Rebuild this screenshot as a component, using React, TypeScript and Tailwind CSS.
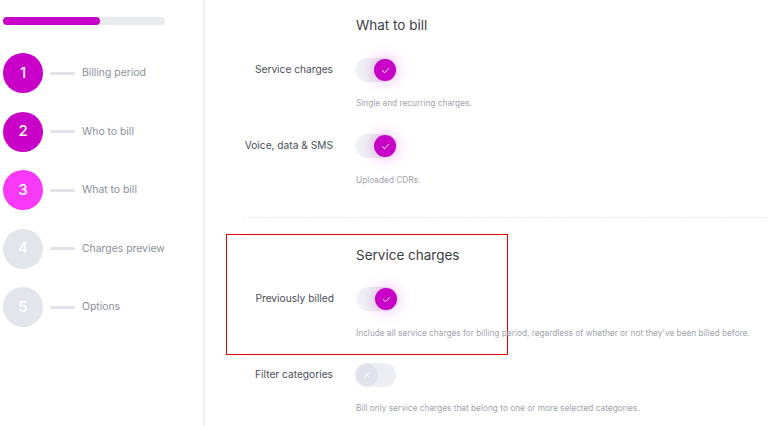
import React from 'react';

const steps = [
    { n: 1, label: 'Billing period', state: 'done' },
    { n: 2, label: 'Who to bill', state: 'done' },
    { n: 3, label: 'What to bill', state: 'current' },
    { n: 4, label: 'Charges preview', state: 'todo' },
    { n: 5, label: 'Options', state: 'todo' },
];

const Toggle: React.FC<{ on: boolean }> = ({ on }) => {
    if (on) {
        return (
            <div className="flex h-[24px] w-[42px] items-center justify-end rounded-full bg-gradient-to-r from-[#f3f3f7] to-[#e3e4ee] pr-[1px]">
                <div className="flex h-[22px] w-[22px] items-center justify-center rounded-full bg-[#c800c8] shadow-[0_0_12px_4px_rgba(214,60,214,0.22)]">
                    <svg width="9" height="9" viewBox="0 0 10 10" fill="none">
                        <path d="M1.5 5.2 L4 7.5 L8.5 2.5" stroke="white" strokeWidth="1.1" strokeLinecap="round" strokeLinejoin="round" />
                    </svg>
                </div>
            </div>
        );
    }
    return (
        <div className="flex h-[24px] w-[41px] items-center rounded-full bg-[#eceef3] pl-[1px]">
            <div className="flex h-[22px] w-[22px] items-center justify-center rounded-full bg-[#dfe2ea]">
                <svg width="8" height="8" viewBox="0 0 10 10" fill="none">
                    <path d="M2 2 L8 8 M8 2 L2 8" stroke="#f4f5f8" strokeWidth="1.3" strokeLinecap="round" />
                </svg>
            </div>
        </div>
    );
};

const Row: React.FC<{ label: string; on: boolean; className?: string }> = ({ label, on, className }) => (
    <div className={`flex h-[24px] items-center ${className || ''}`}>
        <div className="w-[107px] text-right text-[10.2px] text-[#4a4d57]">{label}</div>
        <div className="ml-[22px]">
            <Toggle on={on} />
        </div>
    </div>
);

const Desc: React.FC<{ children: React.ReactNode; className?: string; boxed?: boolean }> = ({ children, className, boxed }) => (
    <div
        className={`${boxed ? 'ml-[129px]' : 'ml-[130px]'} h-[14px] whitespace-nowrap text-[8.3px] leading-[14px] text-[#a0a3ac] ${className || ''}`}
    >
        {children}
    </div>
);

const App: React.FC = () => {
    return (
        <div className="flex h-[426px] w-[768px] overflow-hidden bg-white" style={{ fontFamily: 'Inter, "Noto Sans", sans-serif' }}>
            <aside className="h-full w-[205px] shrink-0 border-r-2 border-[#f1f2f6]">
                <div className="ml-[3px] mt-[17px] h-[8px] w-[162px] rounded-full bg-[#e8eaee]">
                    <div className="h-full w-[97px] rounded-full bg-[#c800c8]" />
                </div>
                <div className="mt-[28px] flex flex-col gap-[18.5px]">
                    {steps.map(s => (
                        <div key={s.n} className="flex h-[40px] items-center">
                            <div
                                className={`ml-[3px] flex h-[40px] w-[40px] items-center justify-center rounded-full text-[15px] font-medium text-white ${
                                    s.state === 'done' ? 'bg-[#c800c8]' : s.state === 'current' ? 'bg-[#f83af8]' : 'bg-[#e2e5ec]'
                                }`}
                            >
                                {s.n}
                            </div>
                            <div className="ml-[7px] h-[3px] w-[25px] rounded-full bg-[#dfe2e8]" />
                            <div className="ml-[7px] text-[10.4px] text-[#8b8f9a]">{s.label}</div>
                        </div>
                    ))}
                </div>
            </aside>

            <main className="flex-1 pl-[21px]">
                <div className="ml-[130px] mt-[16px] h-[18px] text-[13.5px] leading-[18px] text-[#3b3d45]">What to bill</div>
                <Row label="Service charges" on className="mt-[24px]" />
                <Desc className="mt-[14px]">Single and recurring charges.</Desc>
                <Row label="Voice, data & SMS" on className="mt-[24px]" />
                <Desc className="mt-[15px]">Uploaded CDRs.</Desc>

                <div className="ml-[18px] mt-[30px] border-t border-dashed border-[#e6e7eb]" />

                <div className="mt-[16px] w-[282px] border border-[#e60000] pb-[14px] pt-[11px]">
                    <div className="ml-[129px] h-[18px] text-[13.5px] leading-[18px] text-[#3b3d45]">Service charges</div>
                    <Row label="Previously billed" on className="mt-[23px]" />
                    <Desc boxed className="mt-[15px]">
                        Include all service charges for billing period, regardless of whether or not they've been billed before.
                    </Desc>
                </div>

                <Row label="Filter categories" on={false} className="mt-[8px]" />
                <Desc className="mt-[14px]">Bill only service charges that belong to one or more selected categories.</Desc>
            </main>
        </div>
    );
};

export default App;
